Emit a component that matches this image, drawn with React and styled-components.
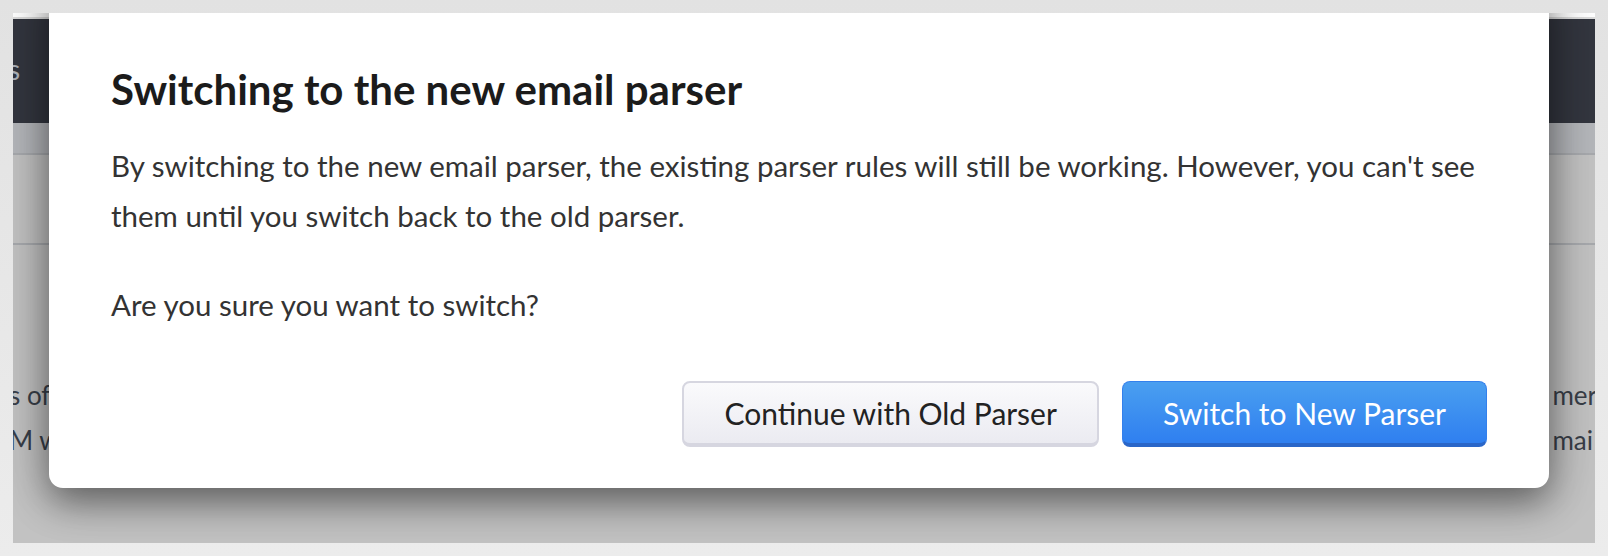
import styled, { createGlobalStyle } from 'styled-components';

const GlobalStyle = createGlobalStyle`
  html, body {
    margin: 0;
    padding: 0;
    background: #e6e6e6;
  }
  * {
    box-sizing: border-box;
  }
`;

const Frame = styled.div`
  width: 1608px;
  height: 556px;
  padding: 13px;
  background: linear-gradient(#e2e2e2, #ececec);
`;

const Screen = styled.div`
  position: relative;
  width: 1582px;
  height: 530px;
  overflow: hidden;
  background: #ffffff;
  font-family: Lato, "Open Sans", sans-serif;
`;

const TopStrip = styled.div`
  height: 4px;
  background: #ffffff;
  border-bottom: 2px solid #dcdcdc;
  box-sizing: content-box;
`;

const Header = styled.div`
  height: 104px;
  display: flex;
  align-items: center;
  background: #434753;
  color: #e4e9f2;
  font-size: 28px;
`;

const HeaderLabel = styled.span`
  margin-left: -5px;
  margin-top: -4px;
`;

const SubBar = styled.div`
  height: 32px;
  background: #edf0f5;
  border-bottom: 2px solid #dcdfe4;
`;

const Toolbar = styled.div`
  height: 90px;
  border-bottom: 2px solid #dcdfe4;
`;

const ContentRow = styled.div`
  display: flex;
  justify-content: space-between;
  color: #4c535f;
  font-size: 26px;
  line-height: 45px;
  padding-top: 128px;
`;

const Cut = styled.div`
  display: flex;
  flex-direction: column;
  margin-left: ${p => (p.$left ? '-4px' : '0')};
  margin-right: ${p => (p.$right ? '-2px' : '0')};
`;

const Overlay = styled.div`
  position: absolute;
  top: 6px;
  left: 0;
  right: 0;
  bottom: 0;
  background: rgba(0, 0, 0, 0.24);
  padding-left: 36px;
`;

const Modal = styled.div`
  width: 1500px;
  margin-top: -40px;
  padding: 85px 62px 41px;
  background: #ffffff;
  border-radius: 14px;
  box-shadow: 0 14px 36px rgba(0, 0, 0, 0.45), 0 0 60px rgba(0, 0, 0, 0.18);
`;

const Title = styled.h2`
  margin: 0;
  font-size: 42px;
  font-weight: 700;
  color: #1b1b1b;
  line-height: 50px;
`;

const Text = styled.p`
  margin: 0;
  font-size: 29.5px;
  line-height: 50px;
  color: #333333;
  margin-right: -24px;
  margin-top: ${p => p.$gap || '0'};
`;

const Actions = styled.div`
  display: flex;
  justify-content: flex-end;
  gap: 23px;
  margin-top: 51px;
`;

const Button = styled.button`
  height: 66px;
  padding: 0 40px;
  border-radius: 8px;
  font-family: Lato, "Open Sans", sans-serif;
  font-size: 30px;
  cursor: pointer;
  ${p => p.$primary ? `
    color: #ffffff;
    border: 1px solid #3480ec;
    border-bottom: 4px solid #2a66c8;
    background: linear-gradient(#4a9ff0, #2f7ff0);
  ` : `
    color: #222222;
    border: 2px solid #d6d6e0;
    border-bottom-width: 4px;
    background: linear-gradient(#fafafc, #ebebf1);
  `}
`;

const App = () => {
  return (
    <Frame>
      <GlobalStyle />
      <Screen>
        <TopStrip />
        <Header>
          <HeaderLabel>s</HeaderLabel>
        </Header>
        <SubBar />
        <Toolbar />
        <ContentRow>
          <Cut $left>
            <span>s of</span>
            <span>M w</span>
          </Cut>
          <Cut $right>
            <span>mer</span>
            <span>mai</span>
          </Cut>
        </ContentRow>
        <Overlay>
          <Modal>
            <Title>Switching to the new email parser</Title>
            <Text $gap="27px">
              By switching to the new email parser, the existing parser rules will still be working. However, you can't see them until you switch back to the old parser.
            </Text>
            <Text $gap="39px">Are you sure you want to switch?</Text>
            <Actions>
              <Button>Continue with Old Parser</Button>
              <Button $primary>Switch to New Parser</Button>
            </Actions>
          </Modal>
        </Overlay>
      </Screen>
    </Frame>
  );
};

export default App;
